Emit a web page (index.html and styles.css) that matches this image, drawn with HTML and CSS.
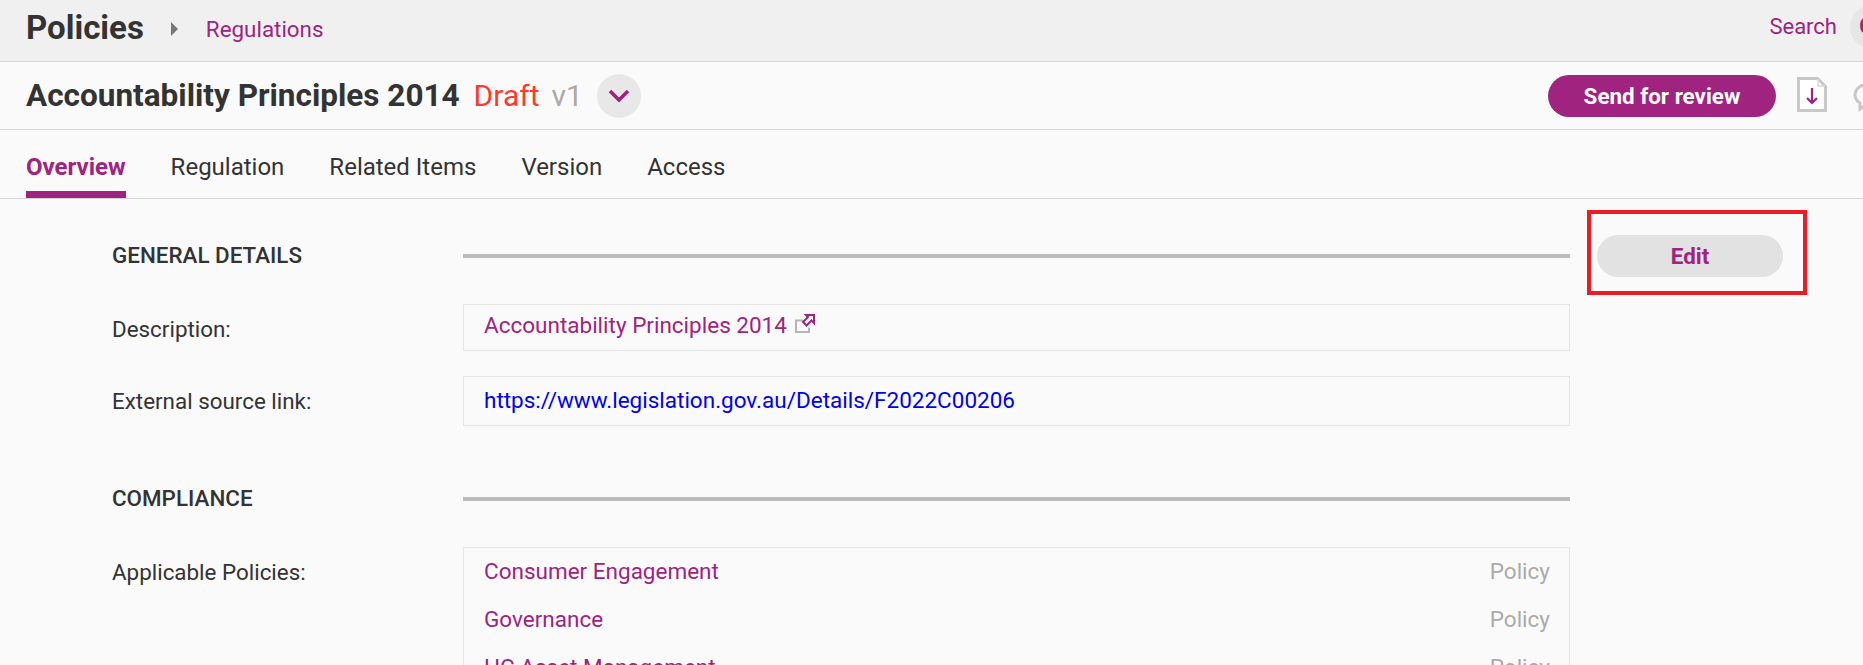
FILE: index.html
```html
<!DOCTYPE html>
<html lang="en">
<head>
    <meta charset="UTF-8">
    <title>Accountability Principles 2014</title>
    <link rel="stylesheet" href="styles.css">
</head>
<body>
    <div class="crumbbar">
        <div class="crumbs">
            <span class="crumbtitle">Policies</span>
            <span class="crumbarrow"></span>
            <a class="crumblink">Regulations</a>
        </div>
        <div class="crumbright">
            <a class="searchlink">Search</a>
            <span class="avatar">C</span>
        </div>
    </div>

    <div class="titlebar">
        <div class="titleleft">
            <h1>Accountability Principles 2014</h1>
            <span class="status">Draft</span>
            <span class="version">v1</span>
            <span class="roundbtn">
                <svg width="22" height="14" viewBox="0 0 22 14"><path d="M2 2l9 9 9-9" fill="none" stroke="#a02380" stroke-width="3.6"/></svg>
            </span>
        </div>
        <div class="titleright">
            <button class="btn primary">Send for review</button>
            <svg class="docicon" width="30" height="35" viewBox="0 0 30 35">
                <path d="M1.500 1.500h19l8 8v24h-27z" fill="#fff" stroke="#c8c8c8" stroke-width="3"/>
                <path d="M21 2v7h7" fill="none" stroke="#dcdcdc" stroke-width="1.500"/>
                <path d="M15 11v15M10 21l5 5 5-5" fill="none" stroke="#a02380" stroke-width="2.200"/>
            </svg>
            <svg class="chaticon" width="32" height="30" viewBox="0 0 32 30">
                <path d="M17 2C8 2 2 7 2 13c0 3 1.500 6 5 8v6l6-4.500h4" fill="none" stroke="#c8c8c8" stroke-width="3"/>
            </svg>
        </div>
    </div>

    <div class="tabs">
        <a class="tab active">Overview</a>
        <a class="tab">Regulation</a>
        <a class="tab">Related Items</a>
        <a class="tab">Version</a>
        <a class="tab">Access</a>
    </div>

    <div class="content">
        <div class="main">
            <div class="sechead">
                <div class="seclabel">GENERAL DETAILS</div>
                <div class="secline"></div>
            </div>
            <div class="row descrow">
                <div class="rowlabel">Description:</div>
                <div class="box">
                    <a class="link">Accountability Principles 2014</a>
                    <svg class="exticon" width="20" height="19" viewBox="0 0 20 19">
                        <path d="M8 6.500H1v11.500h13v-4.500" fill="none" stroke="#b5b5b5" stroke-width="2"/>
                        <path d="M11 1h8v8l-2.500-2.500-5 5-3.500-3.500 5-5z" fill="#fafafa" stroke="#a02380" stroke-width="2"/>
                    </svg>
                </div>
            </div>
            <div class="row urlrow">
                <div class="rowlabel">External source link:</div>
                <div class="box">
                    <a class="urllink">https://www.legislation.gov.au/Details/F2022C00206</a>
                </div>
            </div>

            <div class="sechead second">
                <div class="seclabel">COMPLIANCE</div>
                <div class="secline"></div>
            </div>
            <div class="row listrow">
                <div class="rowlabel">Applicable Policies:</div>
                <div class="box listbox">
                    <div class="item"><a class="link">Consumer Engagement</a><span class="itemtype">Policy</span></div>
                    <div class="item"><a class="link">Governance</a><span class="itemtype">Policy</span></div>
                    <div class="item"><a class="link">HC Asset Management</a><span class="itemtype">Policy</span></div>
                </div>
            </div>
        </div>
        <div class="side">
            <div class="editframe">
                <button class="btn editbtn">Edit</button>
            </div>
        </div>
    </div>
</body>
</html>
```

FILE: styles.css
```css
*{
    box-sizing: border-box;
}
html, body{
    height: 100%;
    overflow: hidden;
}
body{
    margin: 0;
    background-color: #fafafa;
    color: #333;
    font-family: Roboto, sans-serif;
    font-size: 22.4px;
}
.crumbbar{
    display: flex;
    justify-content: space-between;
    height: 62px;
    background-color: #f0f0f0;
    border-bottom: 1px solid #d5d5d5;
    padding-left: 26px;
}
.crumbs{
    display: flex;
    align-items: center;
    height: 54px;
}
.crumbtitle{
    font-size: 33px;
    font-weight: 700;
}
.crumbarrow{
    width: 0;
    height: 0;
    margin: 4px 28px 0 27px;
    border-left: 7px solid #777;
    border-top: 7px solid transparent;
    border-bottom: 7px solid transparent;
}
.crumblink{
    color: #a02380;
    margin-top: 4px;
}
.crumbright{
    display: flex;
    align-items: center;
    height: 53px;
}
.searchlink{
    color: #a02380;
    font-size: 22px;
    margin-right: 13px;
}
.avatar{
    display: block;
    width: 44px;
    height: 44px;
    margin-right: -31px;
    padding-left: 9px;
    border-radius: 50%;
    background-color: #e6e6e6;
    color: #a02380;
    line-height: 42px;
    font-weight: 500;
    font-size: 24px;
}
.titlebar{
    display: flex;
    justify-content: space-between;
    height: 68px;
    border-bottom: 1px solid #d5d5d5;
    padding-left: 26px;
}
.titleleft{
    display: flex;
    align-items: center;
    height: 67px;
}
h1{
    margin: 0 14px 0 0;
    font-size: 31.5px;
    font-weight: 700;
}
.status{
    color: #ff3a2d;
    font-size: 30px;
    margin-right: 12px;
}
.version{
    color: #aaa;
    font-size: 30px;
    margin-right: 14px;
}
.roundbtn{
    display: flex;
    align-items: center;
    justify-content: center;
    width: 44px;
    height: 44px;
    border-radius: 50%;
    background-color: #e8e8e8;
}
.titleright{
    display: flex;
    align-items: center;
    height: 67px;
    margin-right: -22px;
}
.btn{
    border: 0;
    border-radius: 21px;
    font-family: Roboto, sans-serif;
    font-size: 22.4px;
    font-weight: 700;
    cursor: pointer;
}
.primary{
    width: 228px;
    height: 42px;
    background-color: #a02380;
    color: #fff;
}
.docicon{
    margin: -2px 0 0 21px;
}
.chaticon{
    margin: 2px 0 0 26px;
}
.tabs{
    display: flex;
    height: 69px;
    gap: 45px;
    border-bottom: 1px solid #d5d5d5;
    padding-left: 26px;
}
.tab{
    height: 68px;
    padding-top: 23px;
    font-size: 24px;
    color: #333;
}
.active{
    color: #a02380;
    font-weight: 700;
    border-bottom: 7px solid #a02380;
}
.content{
    display: flex;
    padding-left: 112px;
}
.main{
    width: 1458px;
}
.sechead{
    display: flex;
    align-items: center;
    height: 56px;
    margin-top: 29px;
}
.sechead.second{
    margin-top: 45px;
}
.seclabel{
    width: 351px;
    margin-top: -2px;
    font-weight: 500;
}
.secline{
    flex: 1;
    height: 4px;
    background-color: #bbb;
}
.row{
    display: flex;
}
.rowlabel{
    width: 351px;
    padding-top: 13px;
    line-height: 24px;
}
.box{
    flex: 1;
    border: 1px solid #e5e5e5;
    padding: 10px 20px;
    font-size: 22.5px;
    line-height: 26px;
}
.descrow{
    height: 47px;
    margin-top: 20px;
}
.descrow .box{
    padding-top: 7px;
}
.urlrow{
    height: 50px;
    margin-top: 25px;
}
.listrow{
    margin-top: 20px;
}
.listbox{
    padding: 5px 19px 0 20px;
}
.link{
    color: #a02380;
}
.urllink{
    color: #0000ee;
}
.exticon{
    margin-left: 2px;
    vertical-align: 0;
}
.item{
    display: flex;
    justify-content: space-between;
    height: 48px;
    line-height: 36px;
}
.itemtype{
    color: #aaa;
}
.side{
    width: 220px;
    padding-left: 17px;
    padding-top: 11px;
}
.editframe{
    width: 220px;
    height: 85px;
    border: 4px solid #ec1c24;
    padding: 21px 6px 0;
}
.editbtn{
    display: block;
    width: 186px;
    height: 42px;
    background-color: #e2e2e2;
    color: #a02380;
}
```
